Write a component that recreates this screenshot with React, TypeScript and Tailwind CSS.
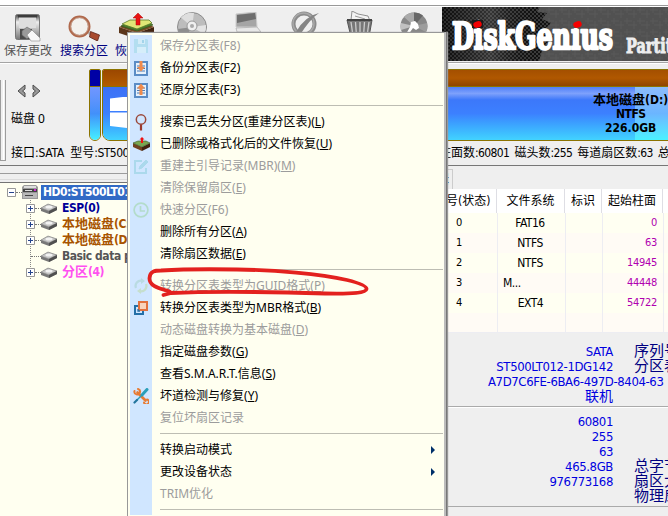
import React from "react";

const CJK = /([\u3000-\u9fff]+)/;
const TAHOMA = "font-['DejaVu_Sans_Condensed','Noto_Sans_CJK_SC',sans-serif]";
const SEGOE = "font-['Noto_Sans','Noto_Sans_CJK_SC',sans-serif]";

/** Chinese runs and Latin runs carry their own spacing. */
function Mixed({ text, latin = "", cjk = "" }: { text: string; latin?: string; cjk?: string }) {
  return (
    <>
      {text.split(CJK).map((run, i) => (
        <span key={i} className={i % 2 ? cjk : latin}>{run}</span>
      ))}
    </>
  );
}

/* ---------- toolbar drawings ---------- */
const SaveDisk = () => (
  <svg width="26" height="28" viewBox="0 0 26 28">
    <defs>
      <linearGradient id="sd" x1="0" y1="0" x2="0" y2="1">
        <stop offset="0" stopColor="#3a3a3a" /><stop offset=".3" stopColor="#eee" /><stop offset="1" stopColor="#777" />
      </linearGradient>
    </defs>
    <rect x=".5" y=".5" width="24" height="25" rx="2" fill="url(#sd)" stroke="#777" />
    <path d="M4 3h17v11H4z" fill="#dedede" /><path d="M3 1h19v2.500H3z" fill="#3c3c3c" />
    <path d="M5 15h12v10H5z" fill="#4b4b4b" />
    <path d="M7 17l5-4 6 4-3 5-3 3-5-4z" fill="#9a9a9a" stroke="#666" strokeWidth=".6" />
    <path d="M12 21l5-5 8 8v3h-9z" fill="#f8f8f8" stroke="#888" strokeWidth=".6" />
  </svg>
);
const Magnifier = () => (
  <svg width="32" height="26" viewBox="0 0 32 26">
    <path d="M19 17l4 2" stroke="#bbb" strokeWidth="3" />
    <circle cx="11.500" cy="11.500" r="9.700" fill="#f3f1ee" stroke="#b0694c" strokeWidth="2.600" />
    <circle cx="11.500" cy="11.500" r="8.800" fill="none" stroke="#c9a999" strokeWidth=".8" />
    <path d="M22.500 16.500l9 3.500-2 6-8-4z" fill="#a84a2e" stroke="#5d241a" strokeWidth=".8" />
  </svg>
);
const Crate = ({ w }: { w: number }) => (
  <svg width={w} height={(w * 26) / 37} viewBox="0 0 37 26">
    <path d="M1 14l18 6v6L1 20z" fill="#5b3519" /><path d="M36 14l-17 6v6l17-6z" fill="#432411" />
    <path d="M1 14L10 10h18l8 4-17 6z" fill="#7a4c25" />
    <path d="M3 13l8-4h20l4 3-16 6z" fill="#4c7d2d" stroke="#2f4f1a" strokeWidth=".6" />
    <path d="M4 11l8-4h19l3 3-15 6z" fill="#dfe777" stroke="#587a2a" strokeWidth=".8" />
    <path d="M20 0l5 5h-3v7h-4V5h-3z" fill="#e81313" stroke="#a80b0b" strokeWidth=".5" />
  </svg>
);
const Disc = () => (
  <svg width="30" height="30" viewBox="0 0 30 30">
    <circle cx="15" cy="15" r="14.500" fill="#bdbdbd" stroke="#8c8c8c" />
    <path d="M15 15L4 5.500A14 14 0 0 1 17 1z" fill="#dedede" /><path d="M15 15L29 13A14 14 0 0 1 27 22z" fill="#e4e4e4" />
    <path d="M15 15L1 17a14 14 0 0 0 7 10z" fill="#8e8e8e" />
    <circle cx="15" cy="14" r="5" fill="#f0f0f0" stroke="#999" /><circle cx="15" cy="14" r="2" fill="#aaa" />
  </svg>
);
const Laptop = () => (
  <svg width="26" height="22" viewBox="0 0 26 22">
    <path d="M1 2l20-2 1 15H1z" fill="#a5a5a5" stroke="#ccc" /><path d="M2 3l18-2 1 6L2 11z" fill="#6e6e6e" />
    <path d="M1 16l21-1 4 5H2z" fill="#e8e8e8" stroke="#aaa" strokeWidth=".7" />
  </svg>
);
const Forbid = () => (
  <svg width="30" height="26" viewBox="0 0 30 26">
    <circle cx="13" cy="13" r="10.500" fill="none" stroke="#8b8b8b" strokeWidth="4" />
    <circle cx="12.500" cy="12.500" r="10.500" fill="none" stroke="#a8a8a8" strokeWidth="1.500" />
    <path d="M5 21Q14 5 28 2Q19 8 9 24z" fill="#858585" />
  </svg>
);
const Bin = () => (
  <svg width="28" height="26" viewBox="0 0 28 26">
    <path d="M5 9L6 0l6 3 10 2 2 5z" fill="#f3f3f3" stroke="#777" strokeWidth=".8" /><path d="M9 5l10 3" stroke="#999" />
    <path d="M1 9h25l-3 17H5z" fill="#777" stroke="#555" />
    <path d="M5 11l2 14M9.500 11l1 14M14 11v14M18.500 11l-1 14M23 11l-2 14" stroke="#ccc" strokeWidth="1.300" />
    <path d="M1 9h25" stroke="#444" strokeWidth="2" />
  </svg>
);
const Aperture = () => (
  <svg width="28" height="28" viewBox="0 0 28 28">
    <circle cx="14" cy="14" r="13.500" fill="#888" />
    <path d="M14 14L4 5A13.500 13.500 0 0 1 14 .5z" fill="#aaa" /><path d="M14 14V.5a13.500 13.500 0 0 1 9 3z" fill="#686868" />
    <path d="M14 14l13-3a13.500 13.500 0 0 1-1 9z" fill="#9d9d9d" /><path d="M14 14l-13 4a13.500 13.500 0 0 1 0-7z" fill="#c1c1c1" />
    <path d="M11 10l4-1 3 3 1 4-3 2-3-2-5 7-2-1 4-7z" fill="#fff" />
  </svg>
);

/* ---------- menu drawings ---------- */
const icons: Record<string, React.ReactNode> = {
  floppy: (
    <svg width="16" height="16" viewBox="0 0 16 16"><path d="M1 1h13l1 1v13H1z" fill="#b3def0" /><path d="M5 1h7v5H5z" fill="#d3ecf8" /><path d="M9 2h2v3H9z" fill="#a3d4ea" /><path d="M4 9h9v6H4z" fill="#d6eefa" /></svg>
  ),
  backup: (
    <svg width="14" height="15" viewBox="0 0 14 15"><path d="M0 0h14v15H0z" fill="#5a8cc6" /><path d="M2 2h10v11H2z" fill="#e8f1fa" /><path d="M3 5h8M3 7.500h8M3 10h8" stroke="#4a7ab5" /><path d="M5.500 0h3v6H11l-4 4.500L3 6h2.500z" fill="#f08a4b" /></svg>
  ),
  restore: (
    <svg width="14" height="15" viewBox="0 0 14 15"><path d="M0 0h14v15H0z" fill="#5a8cc6" /><path d="M2 2h10v11H2z" fill="#e8f1fa" /><path d="M3 5h8M3 7.500h8M3 10h8" stroke="#4a7ab5" /><path d="M5.500 12h3V5.500H11L7 .5 3 5.500h2.500z" fill="#f08a4b" /></svg>
  ),
  search: (
    <svg width="12" height="17" viewBox="0 0 12 17"><circle cx="6" cy="5.500" r="4.700" fill="none" stroke="#9b4a3c" strokeWidth="1.500" /><path d="M6 10.500V16.500" stroke="#9b3b2d" strokeWidth="2.200" /></svg>
  ),
  crate: (
    <svg width="17" height="14" viewBox="0 0 17 14"><path d="M0 6l9 4v4l-9-4z" fill="#71411f" /><path d="M17 6l-8 4v4l8-4z" fill="#42230f" /><path d="M0 6l5-2h8l4 2-8 4z" fill="#7aa64f" stroke="#3d5c28" strokeWidth=".6" /><path d="M9 0l2.500 2.500H10V6H8V2.500H6.500z" fill="#e11" /></svg>
  ),
  edit: (
    <svg width="15" height="15" viewBox="0 0 15 15" fill="none" stroke="#abd9ec" strokeWidth="2"><path d="M8 2H1v12h11V9" /><path d="M5 10l1-3 6-6 2 2-6 6z" fill="#abd9ec" strokeWidth="1" /></svg>
  ),
  clock: (
    <svg width="16" height="16" viewBox="0 0 16 16" fill="none" stroke="#b3dccb" strokeWidth="1.700"><circle cx="8" cy="8" r="6.900" /><path d="M7.500 4v5H12" /></svg>
  ),
  cycle: (
    <svg width="14" height="16" viewBox="0 0 14 16" fill="none" strokeWidth="2.300"><path d="M2 10A5.300 5.300 0 0 1 8 2.800" stroke="#b9dbe2" /><path d="M12 6A5.300 5.300 0 0 1 6 13.200" stroke="#c5dfcd" /><path d="M7 0l4 3-4 3z" fill="#b9dbe2" stroke="none" /><path d="M7 10l-4 3 4 3z" fill="#c5dfcd" stroke="none" /></svg>
  ),
  squares: (
    <svg width="14" height="14" viewBox="0 0 14 14" fill="none" strokeWidth="2"><path d="M4 5H1v8h8v-3" stroke="#236fa7" /><path d="M5 1h8v8H5z" stroke="#e1713e" fill="#f9d3bb" /><path d="M4 8v2h2" stroke="#236fa7" strokeWidth="1.300" /></svg>
  ),
  tools: (
    <svg width="16" height="16" viewBox="0 0 16 16" fill="none" strokeLinecap="round"><path d="M4.500 4.500l8 8" stroke="#e77b33" strokeWidth="2.600" /><path d="M1.500 3A2.800 2.800 0 1 0 5 1M11 14.500a2.500 2.500 0 1 0 3-3" stroke="#e77b33" strokeWidth="2" /><path d="M14 1.500L9 7" stroke="#299fb9" strokeWidth="3" /><path d="M8 8L4 12" stroke="#299fb9" strokeWidth="1.400" /><path d="M4 12l-2.500 2.500" stroke="#22759e" strokeWidth="2.200" /></svg>
  ),
};

type Item = { t: string; k?: string; icon?: string; off?: boolean; sub?: boolean };
const groups: Item[][] = [
  [
    { t: "保存分区表(F8)", icon: "floppy", off: true },
    { t: "备份分区表(F2)", icon: "backup" },
    { t: "还原分区表(F3)", icon: "restore" },
  ],
  [
    { t: "搜索已丢失分区(重建分区表)", k: "L", icon: "search" },
    { t: "已删除或格式化后的文件恢复", k: "U", icon: "crate" },
    { t: "重建主引导记录(MBR)", k: "M", icon: "edit", off: true },
    { t: "清除保留扇区", k: "E", off: true },
    { t: "快速分区(F6)", icon: "clock", off: true },
    { t: "删除所有分区", k: "A" },
    { t: "清除扇区数据", k: "E" },
  ],
  [
    { t: "转换分区表类型为GUID格式", k: "P", icon: "cycle", off: true },
    { t: "转换分区表类型为MBR格式", k: "B", icon: "squares" },
    { t: "动态磁盘转换为基本磁盘", k: "D", off: true },
    { t: "指定磁盘参数", k: "G" },
    { t: "查看S.M.A.R.T.信息", k: "S" },
    { t: "坏道检测与修复", k: "Y", icon: "tools" },
    { t: "复位坏扇区记录", off: true },
  ],
  [
    { t: "转换启动模式", sub: true },
    { t: "更改设备状态", sub: true },
    { t: "TRIM优化", off: true },
  ],
];

function Menu() {
  return (
    <div className={`absolute left-[127px] top-[32px] h-[500px] w-[319px] overflow-hidden border border-r-2 border-[#989898] border-r-[#bcbcbc] bg-[#fffff0] pl-[2px] pt-[2px] shadow-[1px_0_0_#777,2px_0_1px_#999] ${SEGOE} text-[12px] leading-[22px]`}>
      <div className="bg-linear-to-r from-[#d0e6ff] from-[22px] to-[#fffff0] to-[22px]">
        {groups.map((g, i) => (
          <div key={i}>
            {g.map((m) => (
              <div key={m.t} className={`flex h-[22px] items-center whitespace-nowrap ${m.off ? "text-[#9c9c9c]" : "text-black"}`}>
                <span className="flex w-[22px] shrink-0 justify-center">{m.icon && icons[m.icon]}</span>
                <span className="ml-2 flex-1">
                  {m.t}
                  {m.k && <>(<u className="underline-offset-1">{m.k}</u>)</>}
                </span>
                {m.sub && <svg className="mr-[9px]" width="4" height="8" viewBox="0 0 4 8"><path d="M0 0l4 4-4 4z" fill="#00306a" /></svg>}
              </div>
            ))}
            <div className="flex h-[10px] pl-[30px] pr-px pt-1"><div className="h-px flex-1 bg-[#bdbdb3]" /></div>
          </div>
        ))}
      </div>
    </div>
  );
}

function Toolbar() {
  return (
    <div className="flex h-[54px] w-[668px] overflow-hidden bg-[#efefef]">
      <div className="ml-[2px] flex w-[440px] shrink-0 items-start">
        <div className={`flex w-[52px] flex-col items-center pt-[7px] ${SEGOE} text-[12px] leading-[16px] text-[#555]`}>
          <SaveDisk /><span className="mt-px">保存更改</span>
        </div>
        <div className={`ml-[4px] flex w-[52px] flex-col items-center pt-[8px] ${SEGOE} text-[12px] leading-[16px] text-[#000080]`}>
          <Magnifier /><span className="mt-[2px]">搜索分区</span>
        </div>
        <div className={`ml-[5px] flex w-[45px] flex-col pl-[3px] pt-[6px] ${SEGOE} text-[12px] leading-[16px] text-[#000080]`}>
          <Crate w={37} /><span className="-ml-[3px] mt-[4px] whitespace-nowrap">恢复文件</span>
        </div>
        <div className="ml-[17px] pt-[5px]"><Disc /></div>
        <div className="ml-[28px] pt-[5px]"><Laptop /></div>
        <div className="ml-[30px] pt-[4px]"><Forbid /></div>
        <div className="ml-[25px] pt-[4px]"><Bin /></div>
        <div className="ml-[26px] pt-[5px]"><Aperture /></div>
      </div>
      <svg width="226" height="54" viewBox="0 0 226 54">
        <defs>
          <pattern id="carbon" width="4" height="4" patternUnits="userSpaceOnUse"><path d="M0 0h4v4H0z" fill="#111" /><path d="M0 0h2v2H0zM2 2h2v2H2z" fill="#3c3c3c" /></pattern>
          <pattern id="cloth" width="13" height="11" patternUnits="userSpaceOnUse"><path d="M0 0h13v11H0z" fill="#515151" /><path d="M0 3h8M4 7h9M3 0v6M10 3v8" stroke="#5a5a5a" strokeWidth=".8" /></pattern>
          <linearGradient id="shade" x1="0" x2="1"><stop offset="0" stopColor="#000" stopOpacity=".3" /><stop offset=".5" stopColor="#777" stopOpacity=".35" /><stop offset="1" stopColor="#000" stopOpacity="0" /></linearGradient>
        </defs>
        <path d="M0 0h226v54H0z" fill="url(#cloth)" />
        <path d="M0 0H98l-3 5 10 1-5 6 9 4-6 6 8 8-10 10-4 14H0z" fill="url(#carbon)" />
        <path d="M0 0h98v54H0z" fill="url(#shade)" />
        <text x="10" y="41.500" textLength="161" lengthAdjust="spacingAndGlyphs" className="fill-white stroke-white font-['DejaVu_Serif_Condensed','DejaVu_Serif',serif] text-[37px] font-bold" strokeWidth="2.400" strokeLinejoin="round">DiskGenius</text>
        <path d="M30 13h11v8H30zM130 13h11v8h-11z" fill="#1c1c1c" />
        <path d="M130 12h11v9h-11z" fill="#515151" />
        <ellipse cx="35.500" cy="17.500" rx="4.300" ry="3.200" fill="#f50000" transform="rotate(-15 35.500 17.500)" />
        <ellipse cx="135.500" cy="17.500" rx="4.300" ry="3.200" fill="#f50000" transform="rotate(-15 135.500 17.500)" />
        <text x="184" y="45.500" textLength="72" lengthAdjust="spacingAndGlyphs" className="fill-[#eee] stroke-[#eee] font-['DejaVu_Serif_Condensed','DejaVu_Serif',serif] text-[20px] font-bold" strokeWidth=".9">Partition</text>
      </svg>
    </div>
  );
}

const bodyFill = "bg-linear-to-b from-[#3c70f5] via-[#3c80ff] to-[#42d3ff]";

function DiskPanel() {
  return (
    <div className="flex h-[101px] w-[668px] overflow-hidden bg-[#efefef]">
      <div className="mt-[16px] flex h-[81px] w-[6px] shrink-0 justify-between border-x border-b border-[#9c9c9c] bg-[#efefef]"><i className="ml-[2px] w-px bg-white" /></div>
      <div className="w-[662px] shrink-0 pl-[5px] pt-[5px]">
        <div className="flex h-[72px]">
          <div className="w-[78px] shrink-0 pt-[15px]">
            <svg className="ml-[6px]" width="25" height="14" viewBox="0 0 25 14" fill="#9a9a9a" stroke="#4d4d4d"><path d="M8 1L1 7l7 6V9L5.500 7 8 5z" /><path d="M16 1l7 6-7 6V9l2.500-2L16 5z" /></svg>
            <div className={`mt-[13px] text-[12px] leading-[16px] text-black ${SEGOE}`}>磁盘 0</div>
          </div>
          <div className="flex h-[72px] w-[12px] shrink-0 flex-col overflow-hidden rounded-b-[6px] rounded-t-[2px] border border-[#8c7300]">
            <div className="h-[17px] border-b border-[#8c7300] bg-[#0000a5]" /><div className="flex-1 bg-linear-to-b from-[#7196ff] via-[#4290fa] to-[#46f0ff]" />
          </div>
          <div className="ml-px flex h-[72px] w-[220px] shrink-0 flex-col overflow-hidden rounded-bl-[8px] rounded-tl-[2px] border border-[#8c7300]">
            <div className="h-[17px] border-b border-[#8c7300] bg-linear-to-b from-[#9b4700] to-[#b35c00]" />
            <div className={`flex-1 pl-[7px] pt-[10px] ${bodyFill}`}>
              <svg width="40" height="34" viewBox="0 0 40 34" fill="#fff"><path d="M0 1.500l17-2v14.500H0zM18.500 -1l22-2v17h-22zM0 15.500h17V31L0 29zM18.500 15.500h22v18l-22-2.500z" /></svg>
            </div>
          </div>
          <div className="flex h-[72px] w-[360px] shrink-0 flex-col border border-[#8c7300]">
            <div className="h-[17px] border-b border-[#8c7300] bg-linear-to-b from-[#a44f00] via-[#b05800] to-[#8f4500]" />
            <div className="flex flex-1">
              <div className={`w-[312px] shrink-0 ${bodyFill}`}><div className="h-[13px] bg-linear-to-b from-[#6e93ff]/40 via-[#a9bfff]/60 to-transparent" /></div>
              <div className="flex-1 bg-linear-to-b from-[#8cbcfb] via-[#6bb5ff] to-[#49f2ff]" />
            </div>
          </div>
        </div>
        <div className={`mt-[4px] flex text-[12px] leading-[16px] text-black ${TAHOMA}`}>
          <div className="w-[428px] shrink-0 overflow-hidden whitespace-nowrap"><Mixed text="接口:SATA" latin="tracking-[-0.2px]" /><span className="ml-[6px]"><Mixed text="型号:ST500LT012-1DG142" latin="tracking-[-0.5px]" /></span></div>
          <div className="flex shrink-0 gap-[5px] whitespace-nowrap">
            {["柱面数:60801", "磁头数:255", "每道扇区数:63", "总容量"].map((s) => <span key={s}><Mixed text={s} latin="tracking-[-0.6px]" /></span>)}
          </div>
        </div>
      </div>
    </div>
  );
}

const Drive = () => (
  <svg width="16" height="11" viewBox="0 0 16 11"><path d="M0 5l7-4 9 3v3l-8 4-8-3z" fill="#777" /><path d="M0 5l7-4 9 3-8 4z" fill="#c4c4c4" stroke="#8a8a8a" strokeWidth=".6" /><ellipse cx="8" cy="4" rx="3.500" ry="1.500" fill="#f2f2f2" /><path d="M8 8l8-4v3l-8 4z" fill="#505050" /></svg>
);
const Box = ({ minus }: { minus?: boolean }) => (
  <svg width="9" height="9" viewBox="0 0 9 9"><path d="M.5.5h8v8h-8z" fill="#fff" stroke="#989898" /><path d={minus ? "M2 4.500h5" : "M2 4.500h5M4.500 2v5"} stroke="#24438c" /></svg>
);
const tree = [
  { t: "ESP(0)", c: "text-[#000099]", plus: true },
  { t: "本地磁盘(C:)", c: "text-[#a85400]", plus: true },
  { t: "本地磁盘(D:)", c: "text-[#a85400]", plus: true },
  { t: "Basic data partition", c: "text-[#555]", plus: false },
  { t: "分区(4)", c: "text-[#ff50f0]", plus: true },
];

function Tree() {
  return (
    <div className={`flex w-[447px] shrink-0 flex-col ${TAHOMA} text-[13px] font-bold leading-[16px]`}>
      <div className="h-[7px] bg-[#efefef]" />
      <div className="mb-[2px] h-[7px] border-y border-b-[#dcdcdc] border-t-[#9c9c9c] bg-[#efefef]" />
      <div className="flex-1 border-t border-[#747474] bg-[#fffff0] pt-px">
        <div className="flex h-[16px] items-center whitespace-nowrap">
          <span className="ml-[7px]"><Box minus /></span>
          <i className="w-[6px] border-t border-dotted border-[#777]" />
          <svg width="16" height="14" viewBox="0 0 16 14"><path d="M2 0h12l2 2v12H0V2z" fill="#9a9a9a" /><path d="M2 1h12v2H2z" fill="#ddd" /><path d="M1 4h14v3H1z" fill="#444" /><path d="M1 8h14v5H1z" fill="#b9b9b9" /><path d="M3 5.500h7" stroke="#ddd" /><path d="M3 10.500h8" stroke="#444" /><path d="M12 4h2v2h-2z" fill="#d02bd0" /></svg>
          <span className="ml-[3px] h-[15px] w-[100px] overflow-hidden bg-[#316ac5] pl-[2px] text-[12px] leading-[15px] tracking-[-0.5px] text-white">HD0:ST500LT012-1DG142</span>
        </div>
        <div className="ml-[30px] flex flex-col bg-[linear-gradient(#888_50%,transparent_50%)] bg-[length:1px_2px] bg-repeat-y">
          {tree.map((r) => (
            <div key={r.t} className="-ml-[4px] flex h-[16px] items-center whitespace-nowrap">
              <span className="w-[9px]">{r.plus && <Box />}</span>
              <i className={`border-t border-dotted border-[#777] ${r.plus ? "w-[6px]" : "-ml-[4px] w-[10px]"}`} />
              <Drive />
              <span className={`ml-[5px] ${r.c}`}><Mixed text={r.t} latin="text-[12px] tracking-[-0.45px]" /></span>
            </div>
          ))}
        </div>
      </div>
    </div>
  );
}

const rows = [
  ["0", "FAT16", "0"], ["1", "NTFS", "63"], ["2", "NTFS", "14945"], ["3", "M...", "44448"], ["4", "EXT4", "54722"], ["", "", ""],
];

function Field({ v, label, wide }: { v: string; label?: string; wide?: boolean }) {
  return (
    <div className="flex h-[15px] whitespace-nowrap">
      <span className={`flex shrink-0 text-[#0000e0] ${wide ? "w-[221px] pl-[41px]" : "w-[166px] justify-end"}`}><span><Mixed text={v} latin="tracking-[-0.38px]" cjk="text-[14px]" /></span></span>
      {label && <span className="ml-[21px] text-[15px] text-[#000080]">{label}</span>}
    </div>
  );
}

function Details() {
  return (
    <div className={`flex w-[221px] shrink-0 flex-col overflow-hidden bg-[#efefef] ${TAHOMA} text-[11px]`}>
      <div className="flex h-[23px] items-end"><div className="flex h-[20px] w-[6px] justify-end overflow-hidden border-r border-t border-[#ccc] pr-[3px] pt-px text-[12px] leading-[18px]">辑</div></div>
      <div className="grid h-[24px] shrink-0 grid-cols-[50px_68px_37px_61px_20px] bg-white text-center text-[12px] leading-[24px]">
        {["号(状态)", "文件系统", "标识", "起始柱面", ""].map((h, i) => (
          <span key={i} className={`whitespace-nowrap border-r border-[#dedee4] ${i === 0 ? "-ml-px pr-[7px]" : ""}`}><Mixed text={h} /></span>
        ))}
      </div>
      {rows.map(([n, fs, c], i) => (
        <div key={i} className={`grid h-[20px] shrink-0 grid-cols-[51px_68px_37px_61px_20px] text-center leading-[20px] ${i % 2 ? "bg-[#fffbf5]" : "bg-[#fffff2]"}`}>
          <span className="border-b border-r border-[#ededf2] pl-[9px] text-left">{n}</span>
          <span className={`border-b border-r border-[#ededf2] text-[12px] tracking-[-0.5px] ${fs === "M..." ? "pl-[5px] text-left" : fs === "EXT4" ? "pr-[2px]" : "pr-[3px]"}`}>{fs}</span>
          <span className="border-b border-r border-[#ededf2]" />
          <span className="border-b border-r border-[#ededf2] pr-[6px] text-right tracking-[-0.3px] text-[#b000b0]">{c}</span>
          <span className="border-b border-[#ededf2]" />
        </div>
      ))}
      <div className="shrink-0 text-[13px] leading-[15px]">
        <div className="h-[74px] border-b border-[#aaa] pt-[11px]">
          <Field v="SATA" label="序列号:" /><Field v="ST500LT012-1DG142" label="分区表类型:" /><Field v="A7D7C6FE-6BA6-497D-8404-63" wide /><Field v="联机" />
        </div>
        <div className="h-[100px] border-b border-t border-[#aaa] border-t-white pt-[6px]">
          <Field v="60801" /><Field v="255" /><Field v="63" /><Field v="465.8GB" label="总字节数:" /><Field v="976773168" label="扇区大小:" /><Field v="" label="物理扇区大小:" />
        </div>
      </div>
    </div>
  );
}

export default function App() {
  return (
    <div className="relative flex h-[516px] w-[668px] flex-col overflow-hidden bg-[#efefef]">
      <div className="h-[7px] shrink-0 bg-white"><div className="h-[6px] border-b border-[#999]" /></div>
      <Toolbar />
      <div className="h-[3px] shrink-0 border-b border-white bg-[#a4a4a4]"><div className="h-px bg-[#efefef]" /></div>
      <DiskPanel />
      <div className="h-px shrink-0 bg-[#777]" />
      <div className="flex min-h-0 flex-1"><Tree /><Details /></div>
      <div className={`absolute right-0 top-[93px] w-[75px] whitespace-nowrap text-[12px] font-bold leading-[14px] text-black ${TAHOMA}`}>
        <div><Mixed text="本地磁盘(D:)" cjk="text-[13px]" /></div>
        <div className="pl-[23px] tracking-[-0.5px]">NTFS</div>
        <div className="pl-[12px]">226.0GB</div>
      </div>
      <Menu />
      <svg className="absolute left-[145px] top-[264px]" width="226" height="36" viewBox="0 0 226 36" fill="none" stroke="#e3211e" strokeLinecap="round" strokeLinejoin="round">
        <path d="M25 28C20 25 4 24 4.500 14C5 7 10 6.500 16 6.500C40 5 65 5 92 5.500C130 6 175 10 202 16C214 19 222 22 221.500 25C221 29 208 30 180 29.500C130 28 70 27 26 29L18.500 31" strokeWidth="3.800" />
      </svg>
    </div>
  );
}
